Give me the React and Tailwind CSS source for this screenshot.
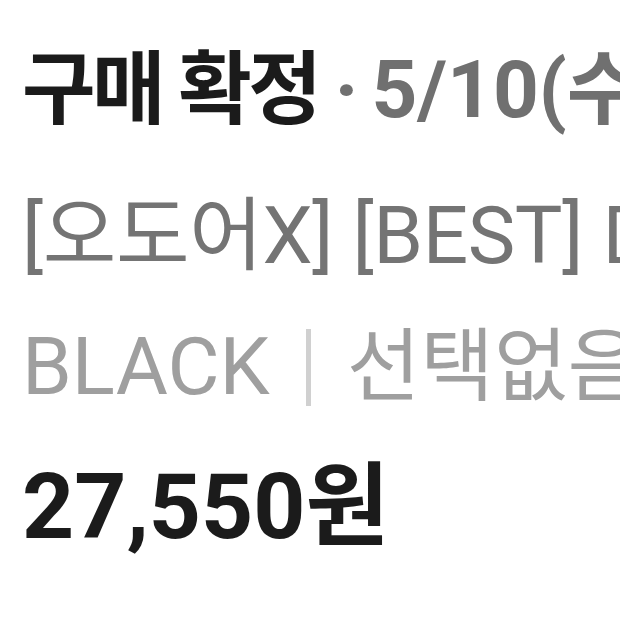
export default function App() {
  return (
    <div
      className="w-[620px] h-[620px] overflow-hidden bg-white"
      style={{ fontFamily: 'Roboto, "Noto Sans CJK KR", sans-serif' }}
    >
      <div className="flex flex-col pl-[22px] pt-[40px] whitespace-nowrap">
        {/* status + date */}
        <div className="text-[80px] leading-[100px] font-bold tracking-[-0.045em] text-[#1b1b1b]">
          구매 확정 <span className="text-[#707070]">· </span>
          <span className="tracking-normal text-[#707070]">5/10(수)</span>
        </div>

        {/* product name */}
        <div className="mt-[46px] text-[80px] leading-[100px] tracking-[-0.005em] text-[#747474]">
          [오도어X] [BEST] DAY PACK
        </div>

        {/* option */}
        <div className="mt-[31px] flex items-center text-[80px] leading-[100px] text-[#9f9f9f]">
          <span>BLACK</span>
          <div className="mx-[36px] w-[5px] h-[77px] shrink-0 bg-[#d0d0d0]" />
          <span>선택없음 / 1개</span>
        </div>

        {/* price */}
        <div className="mt-[40px] text-[91px] leading-[100px] font-bold text-[#1b1b1b]">
          27,550원
        </div>
      </div>
    </div>
  );
}
